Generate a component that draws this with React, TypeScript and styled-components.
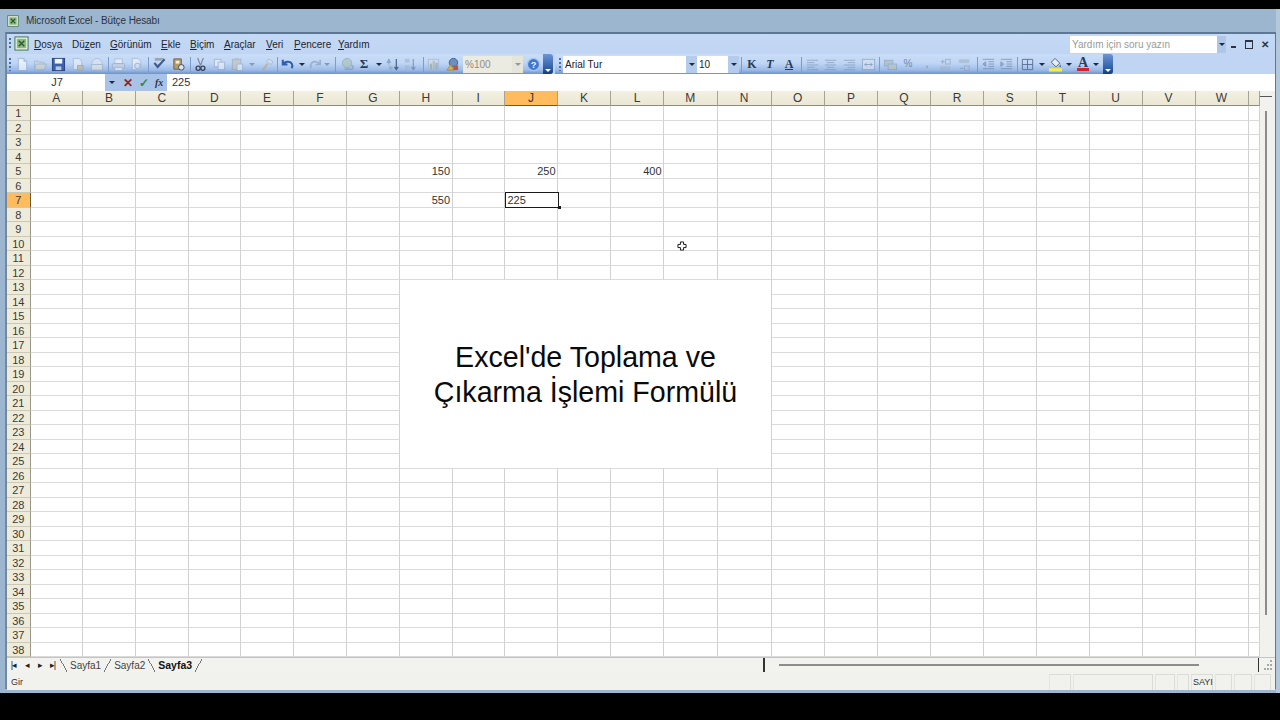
import React from "react";
import styled, { createGlobalStyle } from "styled-components";

const GlobalStyle = createGlobalStyle`
  html, body { margin: 0; padding: 0; background: #000; }
  body { font-family: "Liberation Sans", Arial, sans-serif; overflow: hidden; }
`;

const columns = "ABCDEFGHIJKLMNOPQRSTUVW".split("").concat("");
const rows = Array.from({ length: 38 }, (_, i) => i + 1);
const values: Record<string, string> = { H5: "150", J5: "250", L5: "400", H7: "550", J7: "225" };

const menus = [
  ["", "D", "osya", 38],
  ["Dü", "z", "en", 38],
  ["", "G", "örünüm", 51],
  ["", "E", "kle", 29],
  ["", "B", "içim", 34],
  ["", "A", "raçlar", 42],
  ["", "V", "eri", 28],
  ["", "P", "encere", 44],
  ["", "Y", "ardım", 40],
] as const;

const icons: Record<string, React.ReactNode> = {
  new: <path d="M3.5 1.5h6l3 3v10h-9z M9.5 1.5v3h3" fill="#fff" stroke="#8fa6c6" />,
  open: <path d="M1.5 13.5v-9h4l1 1h5v2M1.5 13.5l2-6h11l-2.5 6z" fill="#d9d8c0" stroke="#93a6bf" />,
  save: <><rect x="1.5" y="1.5" width="13" height="13" fill="#3b62ad" stroke="#24427f" /><rect x="4" y="2" width="8" height="5" fill="#f0f4fb" /><rect x="5" y="10" width="6" height="4" fill="#b9c6dc" /></>,
  perm: <><path d="M3.5 1.5h6l3 3v9h-9z" fill="#eef2f8" stroke="#9aaec9" /><rect x="8" y="9" width="6" height="5" fill="#c7b98b" stroke="#98a08c" /></>,
  mail: <><circle cx="8.5" cy="7" r="5.5" fill="#dfe7f1" stroke="#9fb0c6" /><rect x="2.5" y="8" width="12" height="6" fill="#e9e9df" stroke="#9fa9b6" /></>,
  print: <><rect x="4" y="2" width="8" height="5" fill="#f4f6fa" stroke="#9db0c9" /><rect x="1.5" y="7" width="13" height="5" rx="1" fill="#c9d2de" stroke="#8d9fb8" /><rect x="4" y="11" width="8" height="3.5" fill="#f4f6fa" stroke="#9db0c9" /></>,
  preview: <><path d="M3.5 1.5h6l3 3v9h-9z" fill="#f3f6fa" stroke="#9aaec9" /><circle cx="9" cy="9.5" r="3" fill="#dbe7f5" stroke="#8a9db8" /></>,
  spell: <><rect x="3" y="1" width="10" height="3" fill="#9aa6b8" /><path d="M2 7l4 5 8-9-1.5-.5L6 9 3.5 6z" fill="#3a5796" stroke="#2b4478" strokeWidth=".5" /></>,
  research: <><path d="M3 2h8v11H3z" fill="#b59c62" stroke="#6d6450" /><rect x="5" y="4" width="4" height="3" fill="#eee" /><circle cx="11" cy="11" r="3" fill="#dbe5f4" stroke="#445" /></>,
  cut: <><path d="M5 1l3 8M11 1L8 9" stroke="#7c879a" strokeWidth="1.2" fill="none" /><circle cx="5.5" cy="12" r="2.2" fill="none" stroke="#37415a" strokeWidth="1.4" /><circle cx="10.5" cy="12" r="2.2" fill="none" stroke="#37415a" strokeWidth="1.4" /></>,
  copy: <><rect x="2.5" y="2.5" width="7" height="8" fill="#f1f4f9" stroke="#8ea2bf" /><rect x="6.5" y="5.5" width="7" height="8" fill="#f1f4f9" stroke="#8ea2bf" /></>,
  paste: <><rect x="2.5" y="2.5" width="9" height="11" fill="#c8c2a6" stroke="#92a0ae" /><rect x="5" y="1" width="4" height="3" fill="#aab4c2" /><rect x="7.5" y="7.5" width="6" height="7" fill="#f0f3f8" stroke="#99a8bf" /></>,
  painter: <><path d="M9 2l5 3-2 3-5-3z" fill="#dde3ec" stroke="#9aabc2" /><path d="M8 7L3 14" stroke="#b4a87a" strokeWidth="2.2" /></>,
  undo: <path d="M3 3v5h5M3.5 8C5 4.5 10.5 4 12.5 7c1 1.6.8 3.5 0 5" fill="none" stroke="#2f5fb0" strokeWidth="2.2" />,
  redo: <path d="M13 3v5H8M12.5 8C11 4.5 5.5 4 3.5 7c-1 1.6-.8 3.5 0 5" fill="none" stroke="#98aecb" strokeWidth="1.8" />,
  link: <><circle cx="7.5" cy="6.5" r="5" fill="#a9c1a9" stroke="#8098b6" /><path d="M5 13h7a2 2 0 0 0 0-4" fill="none" stroke="#7e92b0" strokeWidth="1.5" /></>,
  asc: <><path d="M3 2l-2 4h4zM3 6v3" fill="#8fa8c8" stroke="#8fa8c8" /><path d="M11 2v11M9 10.5l2 3 2-3" fill="none" stroke="#4c6386" strokeWidth="1.3" /><rect x="3" y="10" width="4" height="4" fill="#9ab0cc" /></>,
  desc: <><rect x="2" y="2" width="5" height="4" fill="#a2b5cf" /><rect x="2" y="9" width="5" height="5" fill="#a2b5cf" /><path d="M11 2v11M9 10.5l2 3 2-3" fill="none" stroke="#66799a" strokeWidth="1.3" /></>,
  chart: <><rect x="2.5" y="2.5" width="11" height="11" fill="#d7dce0" stroke="#9fb0c2" /><rect x="4" y="7" width="2.5" height="6" fill="#96a59a" /><rect x="7" y="4" width="2.5" height="9" fill="#a9b3a2" /><rect x="10" y="6" width="2.5" height="7" fill="#8da0b8" /></>,
  drawing: <><circle cx="9" cy="6" r="4.5" fill="#6d8fbd" stroke="#3d5f94" /><path d="M2 14l4-6 4 6z" fill="#d6b144" stroke="#8a7a3d" strokeWidth=".6" /><rect x="9" y="9" width="5" height="5" fill="#b5584a" /></>,
  help: <><circle cx="8" cy="8" r="6.5" fill="#3f78cf" stroke="#a9c6ee" strokeWidth="1.5" /><text x="8" y="11.5" fontSize="10" fontWeight="700" fontFamily="Liberation Sans" textAnchor="middle" fill="#eaf2fc">?</text></>,
  alignL: <path d="M2 3.5h12M2 6h8M2 8.5h12M2 11h8M2 13.5h12" stroke="#7b8ea9" fill="none" />,
  alignC: <path d="M2 3.5h12M4 6h8M2 8.5h12M4 11h8M2 13.5h12" stroke="#7b8ea9" fill="none" />,
  alignR: <path d="M2 3.5h12M6 6h8M2 8.5h12M6 11h8M2 13.5h12" stroke="#7b8ea9" fill="none" />,
  merge: <><rect x="1.5" y="2.5" width="13" height="11" fill="#dbe4f0" stroke="#8195b2" /><path d="M4 8h8M6 6l-2 2 2 2M10 6l2 2-2 2" fill="none" stroke="#71849f" /></>,
  currency: <><rect x="1.5" y="3.5" width="9" height="6" fill="#a9b9a9" stroke="#8498b4" /><rect x="5.5" y="7.5" width="9" height="6" fill="#b7c3b0" stroke="#8498b4" /></>,
  incDec: <><path d="M3 5h4M5 3v4" stroke="#7c8ea8" /><rect x="8" y="2.5" width="5" height="5" fill="none" stroke="#8a9cb6" /><rect x="2" y="10" width="11" height="4" fill="#a3b3c8" /></>,
  decDec: <><rect x="2" y="2.5" width="11" height="4" fill="#a3b3c8" /><path d="M3 12h4" stroke="#7c8ea8" /><rect x="8" y="9.5" width="5" height="5" fill="none" stroke="#8a9cb6" /></>,
  outdent: <path d="M2 2.5h12M8 5h6M8 7.5h6M8 10h6M2 12.5h12M5 5L2 7.5 5 10z" stroke="#65799a" fill="#7e90ab" />,
  indent: <path d="M2 2.5h12M8 5h6M8 7.5h6M8 10h6M2 12.5h12M2 5l3 2.5L2 10z" stroke="#65799a" fill="#7e90ab" />,
  borders: <path d="M2.5 2.5h11v11h-11zM8 2.5v11M2.5 8h11" stroke="#5c7196" fill="none" />,
  fill: <><path d="M7.5 1.5l5 5-4 4-5-5z" fill="#e8edf3" stroke="#4a5f7f" /><path d="M13 8c1 1.5 1 3 0 3s-1-1.5 0-3z" fill="#37598c" /><rect x="1" y="12" width="14" height="3.5" fill="#f5ee3a" /></>,
  excel: <><rect x="1" y="1" width="14" height="14" fill="#e6f1e3" stroke="#3d6f4c" /><rect x="3" y="3" width="10" height="10" fill="#8dbb7c" /><path d="M5 5l6 6M11 5l-6 6" stroke="#2a5a38" strokeWidth="1.6" /></>,
  cursor: <path d="M5.5 1.5h5v4h4v5h-4v4h-5v-4h-4v-5h4z" fill="#fff" stroke="#111" strokeWidth="1.5" />,
};

type ToolItem =
  | { k: "icon"; name: string; w: number; faded?: boolean }
  | { k: "arrow"; w: number; faded?: boolean }
  | { k: "sep" }
  | { k: "text"; label: string; w: number; variant: "bold" | "italic" | "under" | "sum" | "plain" }
  | { k: "color"; bar: string; w: number };

const icon = (name: string, w: number, faded = false): ToolItem => ({ k: "icon", name, w, faded });
const arrow = (w: number, faded = false): ToolItem => ({ k: "arrow", w, faded });
const sep: ToolItem = { k: "sep" };

const standardA: ToolItem[] = [
  icon("new", 18, true), icon("open", 18, true), icon("save", 19), icon("perm", 18, true), icon("mail", 20, true), sep,
  icon("print", 16, true), icon("preview", 20, true), sep, icon("spell", 18), icon("research", 20), sep,
  icon("cut", 16), icon("copy", 22, true), icon("paste", 14, true), arrow(16, true), icon("painter", 15, true), sep,
  icon("undo", 16), arrow(14), icon("redo", 12), arrow(12, true), sep, icon("link", 20, true),
  { k: "text", label: "Σ", w: 14, variant: "sum" }, arrow(16), icon("asc", 12), icon("desc", 22, true), sep,
  icon("chart", 16, true), icon("drawing", 22),
];

const formatting: ToolItem[] = [
  sep,
  { k: "text", label: "K", w: 18, variant: "bold" },
  { k: "text", label: "T", w: 18, variant: "italic" },
  { k: "text", label: "A", w: 20, variant: "under" },
  sep, icon("alignL", 18, true), icon("alignC", 18, true), icon("alignR", 20, true), icon("merge", 18, true), sep,
  icon("currency", 18, true),
  { k: "text", label: "%", w: 18, variant: "plain" },
  { k: "text", label: ",", w: 20, variant: "plain" },
  icon("incDec", 16, true), icon("decDec", 22, true), sep,
  icon("outdent", 18, true), icon("indent", 18, true), sep,
  icon("borders", 16), arrow(14), icon("fill", 12), arrow(16),
  { k: "color", bar: "#d8202a", w: 12 }, arrow(14),
];

const statusPanels = [22, 80, 20, 12, 22, 17, 18, 17];

const Icon: React.FC<{ name: string; faded?: boolean }> = ({ name, faded }) => (
  <IconSvg viewBox="0 0 16 16" $faded={faded}>{icons[name]}</IconSvg>
);

const renderTool = (item: ToolItem, i: number) => {
  switch (item.k) {
    case "sep":
      return <ToolSep key={i} />;
    case "arrow":
      return <ToolButton key={i} $w={item.w}><DropArrow $faded={item.faded} /></ToolButton>;
    case "icon":
      return <ToolButton key={i} $w={item.w}><Icon name={item.name} faded={item.faded} /></ToolButton>;
    case "text":
      return <ToolButton key={i} $w={item.w}><ToolText $variant={item.variant}>{item.label}</ToolText></ToolButton>;
    case "color":
      return (
        <ToolButton key={i} $w={item.w}>
          <ColorLetter $bar={item.bar}>A</ColorLetter>
        </ToolButton>
      );
  }
};

const App: React.FC = () => {
  return (
    <>
      <GlobalStyle />
      <Page>
        <ExcelWindow>
          <TitleBar>
            <Icon name="excel" />
            <TitleText>Microsoft Excel - Bütçe Hesabı</TitleText>
          </TitleBar>
          <Inner>
            <MenuBar>
              <GripDots />
              <MenuIcon><Icon name="excel" /></MenuIcon>
              {menus.map(([a, u, b, w]) => (
                <MenuItem key={u} $w={w}>{a}<u>{u}</u>{b}</MenuItem>
              ))}
              <HelpBox>
                <HelpInput>Yardım için soru yazın</HelpInput>
                <HelpArrow><DropArrow /></HelpArrow>
              </HelpBox>
              <WindowButtons>
                <MinButton />
                <RestoreButton />
                <CloseButton>✕</CloseButton>
              </WindowButtons>
            </MenuBar>

            <ToolbarBand>
              <Toolbar>
                <ToolGrip />
                {standardA.map(renderTool)}
                <Combo $w={60} $disabled>
                  <ComboValue $disabled>%100</ComboValue>
                  <ComboArrow $disabled><DropArrow $faded /></ComboArrow>
                </Combo>
                <ToolButton $w={20}><Icon name="help" /></ToolButton>
                <Chevron />
              </Toolbar>
              <Toolbar $second>
                <ToolGrip $wide />
                <Combo $w={134}>
                  <ComboValue>Arial Tur</ComboValue>
                  <ComboArrow><DropArrow /></ComboArrow>
                </Combo>
                <Combo $w={42}>
                  <ComboValue>10</ComboValue>
                  <ComboArrow><DropArrow /></ComboArrow>
                </Combo>
                {formatting.map(renderTool)}
                <Chevron />
              </Toolbar>
            </ToolbarBand>

            <FormulaBar>
              <NameBox>J7</NameBox>
              <FormulaButtons>
                <DropArrow />
                <CancelMark>✕</CancelMark>
                <CheckMark>✓</CheckMark>
                <FxMark>fx</FxMark>
              </FormulaButtons>
              <FormulaInput>225</FormulaInput>
            </FormulaBar>

            <SheetRow>
              <Sheet>
                <Corner />
                {columns.map((c, i) => (
                  <ColumnHead key={i} $active={c === "J"}>{c}</ColumnHead>
                ))}
                {rows.map((r) => (
                  <React.Fragment key={r}>
                    <RowHead $active={r === 7}>{r}</RowHead>
                    {columns.map((c, i) => {
                      const id = `${c}${r}`;
                      const value = values[id];
                      return id === "J7" ? (
                        <ActiveCell key={i}>{value}</ActiveCell>
                      ) : (
                        <Cell key={i}>{value}</Cell>
                      );
                    })}
                  </React.Fragment>
                ))}
                <TitleCard>
                  <TitleCardText>
                    Excel'de Toplama ve
                    <br />
                    Çıkarma İşlemi Formülü
                  </TitleCardText>
                </TitleCard>
                <MouseCursor viewBox="0 0 16 16">{icons.cursor}</MouseCursor>
              </Sheet>
              <VScroll>
                <VRule />
                <VThumb />
              </VScroll>
            </SheetRow>

            <TabBar>
              <TabNav>
                <NavGlyph>|◂</NavGlyph>
                <NavGlyph>◂</NavGlyph>
                <NavGlyph>▸</NavGlyph>
                <NavGlyph>▸|</NavGlyph>
              </TabNav>
              <Tabs>
                <Slash $back />
                <SheetTab>Sayfa1</SheetTab>
                <Slash />
                <SheetTab>Sayfa2</SheetTab>
                <Slash $back />
                <SheetTab $active>Sayfa3</SheetTab>
                <Slash />
              </Tabs>
              <HScroll>
                <HThumb />
              </HScroll>
              <Grip viewBox="0 0 12 12">
                <path d="M9 1h2v2H9zM6 5h2v2H6zM9 5h2v2H9zM3 9h2v2H3zM6 9h2v2H6zM9 9h2v2H9z" fill="#a9a9a2" />
              </Grip>
            </TabBar>

            <StatusBar>
              <StatusText>Gir</StatusText>
              <StatusPanels>
                {statusPanels.map((w, i) => (
                  <StatusPanel key={i} $w={w}>{i === 4 ? "SAYI" : ""}</StatusPanel>
                ))}
              </StatusPanels>
            </StatusBar>
          </Inner>
        </ExcelWindow>
      </Page>
    </>
  );
};

export default App;

const Page = styled.div`
  width: 1280px;
  height: 720px;
  background: #000;
  padding: 9px 0 27px;
  box-sizing: border-box;
  overflow: hidden;
`;

const ExcelWindow = styled.div`
  height: 684px;
  box-sizing: border-box;
  background: #9db6cf;
  border-right: 4px solid #b4c8dc;
  padding: 0 0 4px 5px;
  display: flex;
  flex-direction: column;
`;

const TitleBar = styled.div`
  height: 23px;
  flex: none;
  display: flex;
  align-items: center;
  gap: 7px;
  padding: 0 0 0 2px;

  svg {
    width: 12px;
    height: 12px;
  }
`;

const TitleText = styled.span`
  font-size: 10px;
  letter-spacing: -0.1px;
  color: #2b3440;
`;

const Inner = styled.div`
  flex: 1;
  min-height: 0;
  display: flex;
  flex-direction: column;
  border-top: 2px solid #5c7895;
  border-left: 2px solid #6f89a5;
  border-right: 1px solid #5c7895;
  border-bottom: 1px solid #5c7895;
  background: #f1f1ee;
`;

const MenuBar = styled.div`
  height: 20px;
  flex: none;
  display: flex;
  align-items: center;
  background: linear-gradient(#c4d9f5, #bfd5f3);
  font-size: 10px;
  color: #1d2530;
`;

const GripDots = styled.div`
  width: 2px;
  height: 12px;
  margin: 0 3px 0 2px;
  background: repeating-linear-gradient(#4d6f9f 0 2px, transparent 2px 4px);
`;

const MenuIcon = styled.div`
  width: 20px;
  height: 16px;
  display: flex;

  svg {
    width: 15px;
    height: 15px;
  }
`;

const MenuItem = styled.span<{ $w: number }>`
  width: ${(p) => p.$w}px;
  flex: none;
`;

const HelpBox = styled.div`
  margin-left: 692px;
  display: flex;
  align-items: stretch;
  height: 17px;
`;

const HelpInput = styled.div`
  width: 145px;
  padding-left: 2px;
  background: #fff;
  color: #9a9a9a;
  line-height: 17px;
  font-size: 10px;
`;

const HelpArrow = styled.div`
  width: 9px;
  background: #aec6e8;
  display: flex;
  align-items: center;
  justify-content: center;
`;

const WindowButtons = styled.div`
  flex: 1;
  display: flex;
  align-items: center;
  padding-left: 5px;
`;

const MinButton = styled.div`
  width: 5px;
  height: 2px;
  background: #333;
  margin: 5px 9px 0 0;
`;

const RestoreButton = styled.div`
  width: 6px;
  height: 6px;
  border: 1px solid #2c3440;
  border-top-width: 2px;
  margin-right: 8px;
`;

const CloseButton = styled.span`
  font-size: 10px;
  font-weight: bold;
  color: #2c3440;
`;

const ToolbarBand = styled.div`
  height: 20px;
  flex: none;
  display: flex;
  background: #bfd5f3;
`;

const Toolbar = styled.div<{ $second?: boolean }>`
  display: flex;
  align-items: center;
  height: 20px;
  margin-left: ${(p) => (p.$second ? "2px" : "0")};
  background: linear-gradient(#c9ddf7 0%, #c0d6f5 45%, #9dbbe7 80%, #6c92c9 100%);
  border-radius: 0 3px 3px 0;
`;

const ToolGrip = styled.div<{ $wide?: boolean }>`
  flex: none;
  width: 2px;
  height: 13px;
  margin: 0 2px 0 ${(p) => (p.$wide ? "4px" : "2px")};
  background: repeating-linear-gradient(#4d6f9f 0 2px, transparent 2px 4px);
`;

const ToolButton = styled.div<{ $w: number }>`
  flex: none;
  width: ${(p) => p.$w}px;
  height: 20px;
  display: flex;
  align-items: center;
  justify-content: center;
`;

const IconSvg = styled.svg<{ $faded?: boolean }>`
  flex: none;
  width: 15px;
  height: 15px;
  opacity: ${(p) => (p.$faded ? 0.6 : 1)};
`;

const ToolSep = styled.div`
  flex: none;
  width: 1px;
  height: 15px;
  margin: 0 1.5px;
  background: #7d9cc8;
`;

const DropArrow = styled.div<{ $faded?: boolean }>`
  width: 0;
  height: 0;
  border-left: 3px solid transparent;
  border-right: 3px solid transparent;
  border-top: 3px solid ${(p) => (p.$faded ? "#8699b5" : "#1d2a40")};
`;

const ToolText = styled.span<{ $variant: "bold" | "italic" | "under" | "sum" | "plain" }>`
  color: ${(p) => (p.$variant === "plain" ? "#7487a6" : "#2a3a55")};
  font-family: ${(p) => (p.$variant === "plain" ? '"Liberation Sans"' : '"Liberation Serif"')}, serif;
  font-size: ${(p) => (p.$variant === "sum" ? 13 : p.$variant === "plain" ? 10 : 12)}px;
  font-weight: ${(p) => (p.$variant === "plain" ? 400 : 700)};
  font-style: ${(p) => (p.$variant === "italic" ? "italic" : "normal")};
  border-bottom: ${(p) => (p.$variant === "under" ? "1.5px solid #2a3a55" : "none")};
  line-height: ${(p) => (p.$variant === "under" ? "10px" : "14px")};
`;

const ColorLetter = styled.span<{ $bar: string }>`
  font-family: "Liberation Serif", serif;
  font-size: 14px;
  font-weight: 700;
  line-height: 11px;
  color: #2b3c66;
  border-bottom: 3px solid ${(p) => p.$bar};
  width: 14px;
  text-align: center;
`;

const Combo = styled.div<{ $w: number; $disabled?: boolean }>`
  flex: none;
  width: ${(p) => p.$w}px;
  height: 17px;
  display: flex;
  background: ${(p) => (p.$disabled ? "#ecebe1" : "#fff")};
`;

const ComboValue = styled.div<{ $disabled?: boolean }>`
  flex: 1;
  padding-left: 2px;
  font-size: 10px;
  line-height: 17px;
  color: ${(p) => (p.$disabled ? "#8d8d86" : "#222")};
`;

const ComboArrow = styled.div<{ $disabled?: boolean }>`
  width: 11px;
  display: flex;
  align-items: center;
  justify-content: center;
  background: ${(p) => (p.$disabled ? "#e6e5da" : "#b4cbec")};
`;

const Chevron = styled.div`
  flex: none;
  width: 10px;
  height: 20px;
  box-sizing: border-box;
  position: relative;
  background: linear-gradient(#6c95d2, #2f5ea8 70%, #173a78);
  border-radius: 0 3px 3px 0;

  &::after {
    content: "";
    position: absolute;
    left: 2px;
    bottom: 2px;
    width: 6px;
    height: 3px;
    background: #fff;
    clip-path: polygon(0 0, 100% 0, 50% 100%);
  }
`;

const FormulaBar = styled.div`
  height: 17px;
  flex: none;
  display: flex;
  background: #fff;
  font-size: 11px;
  color: #333;
`;

const NameBox = styled.div`
  width: 98px;
  padding-left: 2px;
  box-sizing: border-box;
  text-align: center;
  line-height: 17px;
`;

const FormulaButtons = styled.div`
  width: 62px;
  display: flex;
  align-items: center;
  gap: 6px;
  box-sizing: border-box;
  padding-left: 4px;
  background: #a9c3e8;
`;

const CancelMark = styled.span`
  font-size: 12px;
  font-weight: bold;
  color: #8e1f2a;
  width: 10px;
  margin-left: 2px;
`;

const CheckMark = styled.span`
  font-size: 12px;
  font-weight: bold;
  color: #2f8a3e;
  width: 10px;
`;

const FxMark = styled.span`
  font-family: "Liberation Serif", serif;
  font-size: 10px;
  font-style: italic;
  font-weight: bold;
  color: #2a3448;
`;

const FormulaInput = styled.div`
  flex: 1;
  padding-left: 5px;
  line-height: 17px;
`;

const SheetRow = styled.div`
  height: 566px;
  flex: none;
  display: flex;
  background: #fff;
`;

const Sheet = styled.div`
  position: relative;
  display: grid;
  grid-template-columns: 23.5px 52.5px 53px 52.5px 52.5px 53px 53px 53px 52.5px 52.5px 53px 53px 53px 53.5px 54px 53.5px 53px 53px 53px 52.5px 53px 53px 53px 53px 11.5px;
  grid-template-rows: 15px repeat(38, 14.5px);
  width: 1253px;
  height: 566px;
  font-size: 11px;
  color: #333;
`;

const Corner = styled.div`
  background: #efebdb;
  border-right: 1px solid #99978a;
  border-bottom: 1px solid #8e8c7c;
  box-sizing: border-box;
`;

const ColumnHead = styled.div<{ $active?: boolean }>`
  box-sizing: border-box;
  font-size: 12px;
  line-height: 14px;
  text-align: center;
  color: #3a3a36;
  background: ${(p) => (p.$active ? "#ffbb5e" : "linear-gradient(#f3f0e2, #ebe7d5)")};
  border-right: 1px solid #a5a394;
  border-bottom: 1px solid ${(p) => (p.$active ? "#6e5a32" : "#8e8c7c")};
`;

const RowHead = styled.div<{ $active?: boolean }>`
  box-sizing: border-box;
  font-size: 11px;
  line-height: 14px;
  text-align: center;
  color: #3a3a36;
  background: ${(p) => (p.$active ? "#ffbb5e" : "#efebdb")};
  border-right: 1px solid ${(p) => (p.$active ? "#6e5a32" : "#99978a")};
  border-bottom: 1px solid #cbc8b6;
`;

const Cell = styled.div`
  box-sizing: border-box;
  border-right: 1px solid #d2d2d2;
  border-bottom: 1px solid #dadada;
  padding-right: 1.5px;
  text-align: right;
  line-height: 14px;
  overflow: hidden;
  white-space: nowrap;
`;

const ActiveCell = styled.div`
  position: relative;
  z-index: 1;
  box-sizing: border-box;
  border: 1.5px solid #1a1a1a;
  margin: -1px -1px 0 0;
  padding-left: 1.5px;
  line-height: 14px;
  text-align: left;

  &::after {
    content: "";
    position: absolute;
    right: -2.5px;
    bottom: -2.5px;
    width: 3px;
    height: 3px;
    background: #1a1a1a;
  }
`;

const TitleCard = styled.div`
  position: absolute;
  z-index: 2;
  left: 393px;
  top: 189px;
  width: 371px;
  height: 188px;
  box-sizing: border-box;
  padding-top: 2px;
  background: #fff;
  display: flex;
  align-items: center;
  justify-content: center;
`;

const TitleCardText = styled.div`
  font-size: 28.6px;
  line-height: 35.5px;
  text-align: center;
  color: #0a0a0a;
`;

const MouseCursor = styled.svg`
  position: absolute;
  z-index: 3;
  left: 670px;
  top: 150px;
  width: 10px;
  height: 10px;
`;

const VScroll = styled.div`
  flex: 1;
  background: #f1f1ee;
  display: flex;
  flex-direction: column;
`;

const VRule = styled.div`
  height: 1px;
  width: 12px;
  margin-top: 5px;
  background: #555;
`;

const VThumb = styled.div`
  width: 2px;
  height: 504px;
  margin: 14px 0 0 5px;
  background: #8c8c8c;
`;

const TabBar = styled.div`
  height: 14px;
  flex: none;
  display: flex;
  align-items: stretch;
  background: #f2f2ef;
  border-top: 1px solid #c4c4c0;
`;

const TabNav = styled.div`
  width: 53px;
  flex: none;
  display: flex;
  align-items: center;
  box-sizing: border-box;
`;

const NavGlyph = styled.span`
  width: 13px;
  font-size: 9px;
  text-align: center;
  letter-spacing: -1px;
  color: #222;
`;

const Tabs = styled.div`
  width: 703px;
  flex: none;
  display: flex;
  align-items: center;
  color: #333;
`;

const SheetTab = styled.span<{ $active?: boolean }>`
  padding: 0 3px;
  font-size: ${(p) => (p.$active ? 10.5 : 10)}px;
  font-weight: ${(p) => (p.$active ? 700 : 400)};
  color: ${(p) => (p.$active ? "#111" : "#444")};
`;

const Slash = styled.span<{ $back?: boolean }>`
  width: 7px;
  height: 13px;
  flex: none;
  background: linear-gradient(
    to ${(p) => (p.$back ? "top right" : "top left")},
    transparent 47%,
    #777 47%,
    #777 54%,
    transparent 54%
  );
`;

const HScroll = styled.div`
  width: 496px;
  flex: none;
  box-sizing: border-box;
  position: relative;
  display: flex;
  align-items: center;
  border-left: 2px solid #333;
  border-right: 1px solid #333;
  padding-left: 14px;
`;

const HThumb = styled.div`
  width: 420px;
  height: 2px;
  background: #8c8c8c;
`;

const Grip = styled.svg`
  width: 12px;
  height: 12px;
  margin: 1px 0 0 2px;
`;

const StatusBar = styled.div`
  flex: 1;
  display: flex;
  align-items: stretch;
  padding: 2px 4px 0 4px;
  background: #f1f1ee;
  font-size: 9px;
  color: #333;
`;

const StatusText = styled.span`
  line-height: 16px;
`;

const StatusPanels = styled.div`
  margin-left: auto;
  display: flex;
  gap: 2px;
`;

const StatusPanel = styled.div<{ $w: number }>`
  width: ${(p) => p.$w}px;
  box-sizing: border-box;
  border-top: 1px solid #dcdcd7;
  border-right: 1px solid #dcdcd7;
  border-left: 1px solid #e4e4df;
  line-height: 15px;
  white-space: nowrap;
  font-size: 9px;
  padding-left: 1px;
`;
